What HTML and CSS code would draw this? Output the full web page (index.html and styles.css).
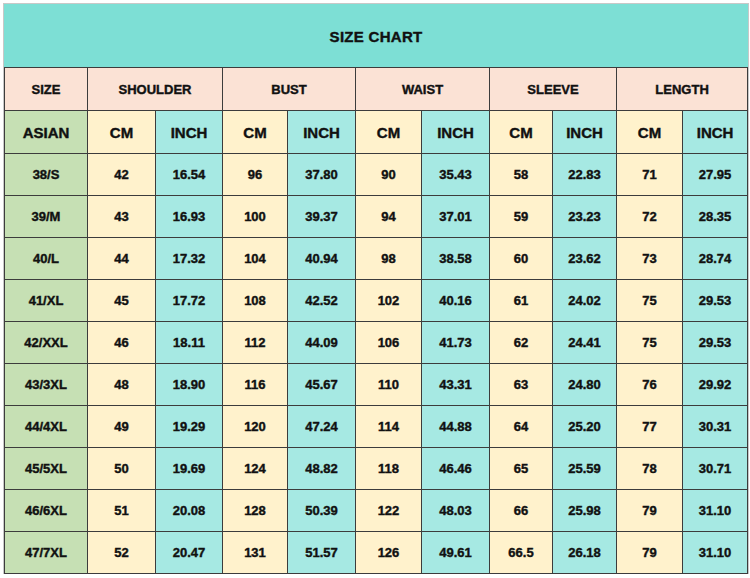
FILE: index.html
```html
<!DOCTYPE html>
<html>
<head>
<meta charset="utf-8">
<link rel="stylesheet" href="styles.css">
</head>
<body>
<table class="chart">
  <colgroup>
    <col class="c-size">
    <col style="width:68px"><col style="width:67px">
    <col style="width:65px"><col style="width:68px">
    <col style="width:66px"><col style="width:68px">
    <col style="width:63px"><col style="width:64px">
    <col style="width:66px"><col style="width:65px">
  </colgroup>
  <tr class="title-row"><td colspan="11" class="title">SIZE CHART</td></tr>
  <tr class="head-row">
    <td class="head">SIZE</td>
    <td class="head" colspan="2">SHOULDER</td>
    <td class="head" colspan="2">BUST</td>
    <td class="head" colspan="2">WAIST</td>
    <td class="head" colspan="2">SLEEVE</td>
    <td class="head" colspan="2">LENGTH</td>
  </tr>
  <tr class="unit-row">
    <td class="sz big">ASIAN</td>
    <td class="cm big">CM</td><td class="in big">INCH</td>
    <td class="cm big">CM</td><td class="in big">INCH</td>
    <td class="cm big">CM</td><td class="in big">INCH</td>
    <td class="cm big">CM</td><td class="in big">INCH</td>
    <td class="cm big">CM</td><td class="in big">INCH</td>
  </tr>
  <tr class="data"><td class="sz">38/S</td><td class="cm">42</td><td class="in">16.54</td><td class="cm">96</td><td class="in">37.80</td><td class="cm">90</td><td class="in">35.43</td><td class="cm">58</td><td class="in">22.83</td><td class="cm">71</td><td class="in">27.95</td></tr>
  <tr class="data"><td class="sz">39/M</td><td class="cm">43</td><td class="in">16.93</td><td class="cm">100</td><td class="in">39.37</td><td class="cm">94</td><td class="in">37.01</td><td class="cm">59</td><td class="in">23.23</td><td class="cm">72</td><td class="in">28.35</td></tr>
  <tr class="data"><td class="sz">40/L</td><td class="cm">44</td><td class="in">17.32</td><td class="cm">104</td><td class="in">40.94</td><td class="cm">98</td><td class="in">38.58</td><td class="cm">60</td><td class="in">23.62</td><td class="cm">73</td><td class="in">28.74</td></tr>
  <tr class="data"><td class="sz">41/XL</td><td class="cm">45</td><td class="in">17.72</td><td class="cm">108</td><td class="in">42.52</td><td class="cm">102</td><td class="in">40.16</td><td class="cm">61</td><td class="in">24.02</td><td class="cm">75</td><td class="in">29.53</td></tr>
  <tr class="data"><td class="sz">42/XXL</td><td class="cm">46</td><td class="in">18.11</td><td class="cm">112</td><td class="in">44.09</td><td class="cm">106</td><td class="in">41.73</td><td class="cm">62</td><td class="in">24.41</td><td class="cm">75</td><td class="in">29.53</td></tr>
  <tr class="data"><td class="sz">43/3XL</td><td class="cm">48</td><td class="in">18.90</td><td class="cm">116</td><td class="in">45.67</td><td class="cm">110</td><td class="in">43.31</td><td class="cm">63</td><td class="in">24.80</td><td class="cm">76</td><td class="in">29.92</td></tr>
  <tr class="data"><td class="sz">44/4XL</td><td class="cm">49</td><td class="in">19.29</td><td class="cm">120</td><td class="in">47.24</td><td class="cm">114</td><td class="in">44.88</td><td class="cm">64</td><td class="in">25.20</td><td class="cm">77</td><td class="in">30.31</td></tr>
  <tr class="data"><td class="sz">45/5XL</td><td class="cm">50</td><td class="in">19.69</td><td class="cm">124</td><td class="in">48.82</td><td class="cm">118</td><td class="in">46.46</td><td class="cm">65</td><td class="in">25.59</td><td class="cm">78</td><td class="in">30.71</td></tr>
  <tr class="data"><td class="sz">46/6XL</td><td class="cm">51</td><td class="in">20.08</td><td class="cm">128</td><td class="in">50.39</td><td class="cm">122</td><td class="in">48.03</td><td class="cm">66</td><td class="in">25.98</td><td class="cm">79</td><td class="in">31.10</td></tr>
  <tr class="data"><td class="sz">47/7XL</td><td class="cm">52</td><td class="in">20.47</td><td class="cm">131</td><td class="in">51.57</td><td class="cm">126</td><td class="in">49.61</td><td class="cm">66.5</td><td class="in">26.18</td><td class="cm">79</td><td class="in">31.10</td></tr>
</table>
</body>
</html>
```

FILE: styles.css
```css
html, body {
  margin: 0;
  padding: 0;
  background: #ffffff;
}
body {
  padding: 4px 0 0 4px;
  font-family: "Liberation Sans", Arial, sans-serif;
  color: #111111;
}
.chart {
  border-collapse: collapse;
  table-layout: fixed;
  width: 743px;
  outline: 1px solid #c8c8c8;
}
.c-size { width: 83px; }
.chart td {
  border: 1.5px solid #3c3c3c;
  text-align: center;
  vertical-align: middle;
  font-weight: bold;
  font-size: 13px;
  padding: 0;
  -webkit-text-stroke: 0.4px #111111;
}
.title-row { height: 63px; }
.head-row { height: 43px; }
.unit-row { height: 43px; }
.data { height: 42px; }
.chart td.title {
  background: #7ddfd5;
  font-size: 15px;
  letter-spacing: 0.3px;
  border-top-color: #7ddfd5;
  border-left-color: #7ddfd5;
  border-right-color: #7ddfd5;
}
.chart td.head { background: #fbe2d5; }
.chart td.sz { background: #c6e0b4; }
.chart td.cm { background: #fff2cc; }
.chart td.in { background: #a6e9e3; }
.chart td.big { font-size: 15px; }
```
